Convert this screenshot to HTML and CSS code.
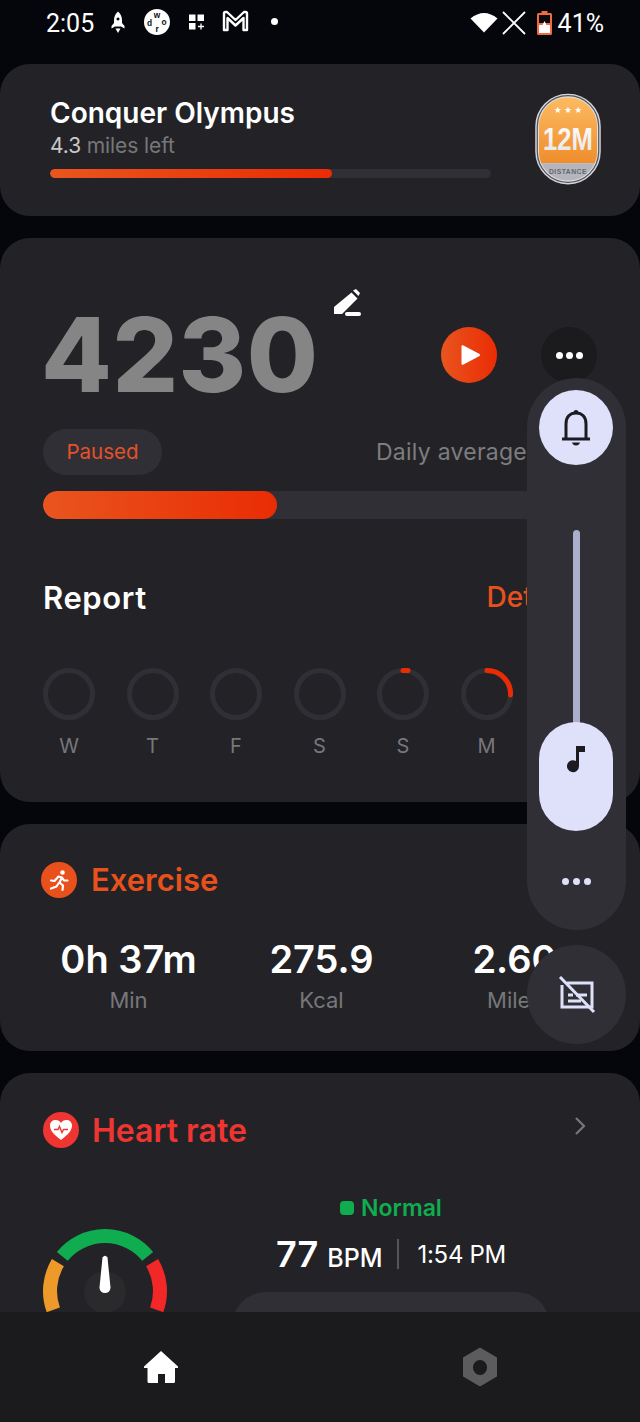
FILE: index.html
```html
<!DOCTYPE html>
<html lang="en">
<head>
  <meta charset="UTF-8">
  <meta name="viewport" content="width=device-width, initial-scale=1.0">
  <title>Activity</title>
  <link rel="stylesheet" href="styles.css">
</head>
<body>
  <div class="screen">
    <div class="statusbar">
      <span class="clock">2:05</span>
      <svg class="st-rocket" width="14" height="22" viewBox="0 0 14 22"><path fill="#fff" fill-rule="evenodd" d="M7 .5c3 2.500 4 5.500 4 9V12l2.500 3v2.500L10 15.500H4L.5 17.500V15L3 12V9.500c0-3.500 1-6.500 4-9zM7 6.500a1.500 1.500 0 1 0 .01 0z"/><path fill="#fff" d="M4.500 17.500h5L7 22z"/></svg>
      <svg class="st-word" width="26" height="26" viewBox="0 0 28 28">
        <circle cx="14" cy="14" r="14" fill="#fff"/>
        <text x="14" y="10" class="st-word-t">w</text>
        <text x="21.500" y="17" class="st-word-t">o</text>
        <text x="14" y="25" class="st-word-t">r</text>
        <text x="6" y="18" class="st-word-t">d</text>
      </svg>
      <svg class="st-tiles" width="18" height="18" viewBox="0 0 18 18"><path fill="#fff" d="M1 1.500h6.500V8H1zM9.500 1.500H16V8H9.500zM1 10h6.500v6.500H1z"/><path stroke="#fff" stroke-width="1.300" d="M13 10.500v6M10 13.500h6"/></svg>
      <svg class="st-mail" width="27" height="22" viewBox="0 0 27 22"><path fill="none" stroke="#fff" stroke-width="2.400" stroke-linejoin="round" d="M2 20V3.500Q2 2 3.500 2H5l8.500 8L22 2h1.500Q25 2 25 3.500V20h-3.500V8l-8 7.500-8-7.500v12z"/></svg>
      <span class="st-dot"></span>
      <span class="st-space"></span>
      <svg class="st-wifi" width="28" height="22" viewBox="0 0 28 22"><path fill="#fff" d="M0.500 7.500Q14-3.500 27.500 7.500L14 21.500z"/></svg>
      <svg class="st-x" width="24" height="24" viewBox="0 0 24 24"><path stroke="#fff" stroke-width="1.800" d="M1 1l22 22M23 1L1 23"/></svg>
      <svg class="st-batt" width="15" height="24" viewBox="0 0 15 24"><path fill="#f26a3e" d="M4.500 0h6v2h3q1.500 0 1.500 1.500v19q0 1.500-1.500 1.500h-12Q0 24 0 22.500v-19Q0 2 1.500 2h3z"/><path fill="#0a0b10" d="M2 4h11v8H2z"/><path fill="#fff" d="M2 14h3.500l2-4 2 4H13v8H2z"/></svg>
      <span class="st-pct">41%</span>
    </div>

    <main class="feed">
      <section class="card goal">
        <div class="goal-text">
          <h2 class="goal-title">Conquer Olympus</h2>
          <p class="goal-sub"><span class="goal-num">4.3</span> miles left</p>
          <div class="track thin"><div class="fill" style="width:64%"></div></div>
        </div>
        <svg class="badge" width="66" height="92" viewBox="0 0 68 94">
          <defs>
            <linearGradient id="badgeOrange" x1="0" y1="0" x2="0" y2="1"><stop offset="0" stop-color="#fdbb62"/><stop offset="1" stop-color="#ef8d2b"/></linearGradient>
            <linearGradient id="badgeText" x1="0" y1="0" x2="0" y2="1"><stop offset="0" stop-color="#fff"/><stop offset="1" stop-color="#e4e4e8"/></linearGradient>
            <clipPath id="badgeClip"><rect x="4" y="4" width="60" height="86" rx="30"/></clipPath>
          </defs>
          <rect x="1" y="1" width="66" height="92" rx="33" fill="#53545a" stroke="#d5d6da" stroke-width="1.500"/>
          <rect x="3" y="3" width="62" height="88" rx="31" fill="#dfe0e4"/>
          <g clip-path="url(#badgeClip)">
            <rect x="4" y="4" width="60" height="68" fill="url(#badgeOrange)"/>
            <rect x="4" y="72" width="60" height="18" fill="#b5b6bd"/>
          </g>
          <text x="34" y="20" class="badge-stars">★ ★ ★</text>
          <text class="badge-num" fill="url(#badgeText)" transform="translate(34 58) scale(.8 1)">12M</text>
          <text x="34" y="83" class="badge-cap">DISTANCE</text>
        </svg>
      </section>

      <section class="card today">
        <div class="count-row">
          <span class="count">4230</span>
          <svg class="edit" width="30" height="30" viewBox="0 0 30 30"><path fill="#fff" d="M21 1.500l3-1.500 4 4-1.500 3zM19.500 3.500l6 6L10 25H2v-7z"/><rect x="13" y="24" width="16" height="4" rx="2" fill="#fff" transform="translate(0 -1)"/></svg>
          <span class="round-btn play"><svg class="play-icon" width="22" height="24" viewBox="0 0 22 24"><path fill="#fff" d="M1.500 3.500q0-2 2-1l16 8.500q1.500 1 0 2l-16 8.500q-2 1-2-1z"/></svg></span>
          <span class="round-btn more"><i></i><i></i><i></i></span>
        </div>
        <div class="state-row">
          <span class="pill">Paused</span>
          <span class="avg">Daily average</span>
        </div>
        <div class="track thick"><div class="fill" style="width:42.200%"></div></div>
        <div class="report-head">
          <h3 class="report-title">Report</h3>
          <span class="report-link">Details</span>
        </div>
        <div class="days">
          <div class="day"><svg class="ring" width="52" height="52" viewBox="0 0 52 52"><circle class="ring-bg" cx="26" cy="26" r="23.500"/></svg><span>W</span></div>
          <div class="day"><svg class="ring" width="52" height="52" viewBox="0 0 52 52"><circle class="ring-bg" cx="26" cy="26" r="23.500"/></svg><span>T</span></div>
          <div class="day"><svg class="ring" width="52" height="52" viewBox="0 0 52 52"><circle class="ring-bg" cx="26" cy="26" r="23.500"/></svg><span>F</span></div>
          <div class="day"><svg class="ring" width="52" height="52" viewBox="0 0 52 52"><circle class="ring-bg" cx="26" cy="26" r="23.500"/></svg><span>S</span></div>
          <div class="day"><svg class="ring" width="52" height="52" viewBox="0 0 52 52"><circle class="ring-bg" cx="26" cy="26" r="23.500"/><path class="ring-on" d="M26 2.500h5"/></svg><span>S</span></div>
          <div class="day"><svg class="ring" width="52" height="52" viewBox="0 0 52 52"><circle class="ring-bg" cx="26" cy="26" r="23.500"/><path class="ring-on" d="M26 2.500A23.500 23.500 0 0 1 49.500 27"/></svg><span>M</span></div>
        </div>
      </section>

      <section class="card exercise">
        <div class="card-head">
          <span class="head-icon orange"><svg width="24" height="24" viewBox="0 0 24 24"><circle cx="15.500" cy="4.500" r="2.300" fill="#fff"/><path fill="none" stroke="#fff" stroke-width="2.200" stroke-linecap="round" stroke-linejoin="round" d="M4 12.500l3.500 .5 4-4.500 3.500 1-2.500 5 3.500 3-.5 4.500M15 9.500l2 3h3.500M11.500 15.500l-2 3-5.500 2"/></svg></span>
          <h3 class="head-title ex-title">Exercise</h3>
        </div>
        <div class="stats">
          <div class="stat"><strong>0h 37m</strong><span>Min</span></div>
          <div class="stat"><strong>275.9</strong><span>Kcal</span></div>
          <div class="stat"><strong>2.60</strong><span>Miles</span></div>
        </div>
      </section>

      <section class="card heart">
        <div class="card-head">
          <span class="head-icon red"><svg width="26" height="26" viewBox="0 0 26 26"><path fill="#fff" d="M13 23C5 17 2 13 2 8.500 2 5 4.700 3 7.500 3 10 3 12 4.300 13 6c1-1.700 3-3 5.500-3C21.300 3 24 5 24 8.500 24 13 21 17 13 23z"/><path fill="none" stroke="#ee3531" stroke-width="1.400" d="M6 12.500h4l1.500-3 2.500 6 1.500-3h4.500"/></svg></span>
          <h3 class="head-title hr-title">Heart rate</h3>
          <svg class="chev" width="12" height="20" viewBox="0 0 12 20"><path fill="none" stroke="#77777a" stroke-width="2.200" d="M2 2l8 8-8 8"/></svg>
        </div>
        <div class="hr-body">
          <svg class="gauge" width="124" height="126" viewBox="0 0 124 126">
            <path fill="none" stroke="#ee9a2a" stroke-width="14" d="M10.300 80.800A55 55 0 0 1 14.900 33.700"/>
            <path fill="none" stroke="#10ad50" stroke-width="14" d="M19.300 27.400A55 55 0 0 1 104.700 27.400"/>
            <path fill="none" stroke="#f22727" stroke-width="14" d="M109.100 33.700A55 55 0 0 1 113.700 80.800"/>
            <circle cx="62" cy="63" r="21" fill="#2a2a2d"/>
            <path fill="#fff" d="M59.500 28.500q2.500-3.500 5 0l3 30a5.500 5.500 0 0 1-11 0z"/>
          </svg>
          <div class="hr-info">
            <div class="hr-state"><i class="hr-dot"></i>Normal</div>
            <div class="hr-read">
              <span class="hr-val">77</span>
              <span class="hr-unit">BPM</span>
              <i class="hr-sep"></i>
              <span class="hr-time">1:54 PM</span>
            </div>
            <div class="hr-box"></div>
          </div>
        </div>
      </section>
    </main>

    <nav class="tabs">
      <svg width="36" height="34" viewBox="0 0 36 34"><path fill="#fff" d="M18 1L35 16.500V18h-3v13.500q0 1.500-1.500 1.500H22v-9h-7v9H6q-1.500 0-1.500-1.500V18H1v-1.500z"/></svg>
      <svg width="36" height="40" viewBox="0 0 36 40"><path fill="#5c5c5e" fill-rule="evenodd" d="M18 .5L35 10.500v19L18 39.500 1 29.500v-19zM18 13a7 7.500 0 1 0 .01 0z"/></svg>
    </nav>

    <!-- volume panel over the page -->
    <div class="volume">
      <span class="vol-top"><svg width="34" height="38" viewBox="0 0 34 38"><path fill="none" stroke="#1c1b22" stroke-width="3" d="M7 30V15C7 8 11 4 17 4s10 4 10 11v15"/><path stroke="#1c1b22" stroke-width="3" d="M3 30h28"/><path fill="#1c1b22" d="M13 33.500h8q-1 3-4 3t-4-3zM14.500 4a2.500 3 0 0 1 5 0z"/></svg></span>
      <div class="vol-slider">
        <div class="vol-line"></div>
        <div class="vol-thumb"><svg width="20" height="28" viewBox="0 0 20 28"><path fill="#1c1b22" d="M10 1h9v6h-6v14.500A6 6 0 1 1 10 16z"/></svg></div>
      </div>
      <div class="vol-more"><i></i><i></i><i></i></div>
    </div>
    <div class="caption-btn">
      <svg width="38" height="38" viewBox="0 0 38 38"><g fill="none" stroke="#dfe1fb" stroke-width="3"><path d="M9 7h25v24H4V9"/><path d="M10 19h5M18 19h11M10 25h13"/><path d="M2 1l34 35"/></g></svg>
    </div>
  </div>
</body>
</html>
```

FILE: styles.css
```css
* {
  box-sizing: border-box;
}

body {
  margin: 0;
  background: #05060b;
  font-family: "Inter", "Liberation Sans", sans-serif;
}

h2, h3, p {
  margin: 0;
}

.screen {
  position: relative;
  width: 640px;
  height: 1422px;
  display: flex;
  flex-direction: column;
  overflow: hidden;
  background: #05060b;
}

/* status bar */
.statusbar {
  height: 64px;
  flex: none;
  display: flex;
  align-items: flex-start;
  padding: 8px 36px 0 46px;
  color: #fff;
  font-family: "Roboto", sans-serif;
  font-size: 25px;
}

.clock {
  line-height: 31px;
  width: 49px;
}

.statusbar svg {
  flex: none;
  margin-top: 3px;
}

.st-rocket { margin-left: 16px; }
.st-word { margin-left: 19px; margin-top: 1px !important; }
.st-tiles { margin-left: 18px; margin-top: 5px !important; }
.st-mail { margin-left: 16px; margin-top: 2px !important; }

.st-word-t {
  font-family: "Liberation Sans", sans-serif;
  font-size: 9px;
  font-weight: 700;
  text-anchor: middle;
  fill: #111;
}

.st-dot {
  width: 7px;
  height: 7px;
  margin: 10px 0 0 22px;
  border-radius: 50%;
  background: #fff;
}

.st-space {
  flex: 1;
}

.st-x { margin-left: 4px; }
.st-batt { margin-left: 11px; }

.st-pct {
  margin-left: 6px;
  line-height: 31px;
}

/* cards */
.feed {
  flex: 1;
  min-height: 0;
  display: flex;
  flex-direction: column;
  gap: 22px;
  overflow: hidden;
}

.card {
  flex: none;
  background: #232327;
  border-radius: 30px;
}

.goal {
  height: 152px;
  display: flex;
  padding: 29px 38px 0 50px;
  justify-content: space-between;
}

.goal-text {
  width: 441px;
}

.goal-title {
  font-size: 28px;
  line-height: 40px;
  font-weight: 600;
  color: #fff;
}

.goal-sub {
  font-size: 21px;
  line-height: 26px;
  color: #77777a;
  margin-bottom: 10px;
  letter-spacing: -.1px;
}

.goal-num {
  color: #c9c9cb;
}

.track {
  background: #2f2f35;
  overflow: hidden;
}

.fill {
  height: 100%;
  border-radius: inherit;
  background: linear-gradient(90deg, #e9551e, #ea2c05);
}

.track.thin {
  height: 9px;
  border-radius: 5px;
}

.badge {
  flex: none;
  margin-right: 1px;
}

.badge-stars {
  font-size: 8px;
  text-anchor: middle;
  fill: #fff;
}

.badge-num {
  font-family: "Liberation Sans", sans-serif;
  font-size: 33px;
  font-weight: 700;
  text-anchor: middle;
}

.badge-cap {
  font-family: "Liberation Sans", sans-serif;
  font-size: 7px;
  font-weight: 700;
  text-anchor: middle;
  letter-spacing: .5px;
  fill: #65666d;
}

/* daily count */
.today {
  height: 564px;
  padding: 0 0 0 43px;
  overflow: hidden;
}

.count-row {
  height: 148px;
  display: flex;
  align-items: flex-start;
  padding-top: 51px;
}

.count {
  flex: none;
  width: 291px;
  margin-left: -2px;
  font-size: 103px;
  line-height: 132px;
  font-weight: 800;
  letter-spacing: .5px;
  color: #858585;
}

.edit {
  flex: none;
}

.round-btn {
  flex: none;
  width: 56px;
  height: 56px;
  border-radius: 50%;
  display: flex;
  align-items: center;
  justify-content: center;
  margin-top: 38px;
}

.play {
  margin-left: 79px;
  background: linear-gradient(90deg, #e9551e, #ea2c05);
}

.play-icon {
  margin-left: 4px;
}

.more {
  margin-left: 44px;
  gap: 3px;
  background: #1b1b1d;
}

.more i, .vol-more i {
  width: 7px;
  height: 7px;
  border-radius: 50%;
  background: #fff;
}

.state-row {
  display: flex;
  align-items: center;
  height: 46px;
  margin-top: 43px;
}

.pill {
  width: 119px;
  height: 46px;
  line-height: 46px;
  text-align: center;
  border-radius: 23px;
  background: #2f2f35;
  color: #e5512a;
  font-size: 20.500px;
}

.avg {
  margin-left: 214px;
  font-size: 23px;
  letter-spacing: .25px;
  color: #7d7d7f;
  white-space: nowrap;
}

.track.thick {
  height: 28px;
  margin: 16px 43px 0 0;
  border-radius: 14px;
}

.report-head {
  display: flex;
  justify-content: space-between;
  align-items: center;
  height: 44px;
  margin-top: 56px;
  padding-right: 62px;
}

.report-title {
  font-size: 31px;
  font-weight: 600;
  letter-spacing: .6px;
  color: #fff;
}

.report-link {
  font-size: 28px;
  font-weight: 500;
  color: #e9511c;
}

.days {
  display: flex;
  margin-top: 49px;
  gap: 31.500px;
}

.day {
  width: 52px;
  display: flex;
  flex-direction: column;
  align-items: center;
  gap: 12px;
  font-size: 20px;
  line-height: 28px;
  color: #77777a;
}

.ring-bg {
  fill: none;
  stroke: #2f2f35;
  stroke-width: 5;
}

.ring-on {
  fill: none;
  stroke: #ea2c05;
  stroke-width: 5;
  stroke-linecap: round;
}

.card-head {
  display: flex;
  align-items: center;
}

.head-icon {
  flex: none;
  width: 36px;
  height: 36px;
  border-radius: 50%;
  display: flex;
  align-items: center;
  justify-content: center;
}

.head-icon.orange { background: #e9511c; }
.head-icon.red { background: #ee3531; }

.head-title {
  margin-left: 14px;
  font-size: 31px;
  line-height: 34px;
  font-weight: 600;
}

.ex-title { color: #e9511c; }

.hr-title {
  margin: 2px 0 0 13px;
  font-size: 32px;
  color: #ee3531;
}

.exercise {
  height: 227px;
  padding: 38px 0 0 41px;
}

.stats {
  display: grid;
  grid-template-columns: repeat(3, 193px);
  margin: 39px 0 0 -9px;
}

.stat {
  display: flex;
  flex-direction: column;
  align-items: center;
  color: #77777a;
  font-size: 22px;
  line-height: 28px;
}

.stat strong {
  font-size: 38px;
  line-height: 44px;
  font-weight: 600;
  color: #fff;
  margin-bottom: 5px;
  white-space: nowrap;
}

.heart {
  height: 300px;
  padding: 39px 0 0 43px;
}

.chev {
  margin-left: auto;
  margin-right: 54px;
  margin-top: -8px;
}

.hr-body {
  display: flex;
  margin-top: 41px;
}

.gauge {
  flex: none;
  margin-top: 40px;
}

.hr-info {
  width: 318px;
  margin-left: 65px;
  display: flex;
  flex-direction: column;
  align-items: center;
}

.hr-state {
  display: flex;
  align-items: center;
  gap: 7px;
  margin-top: 5px;
  font-size: 23px;
  line-height: 28px;
  font-weight: 600;
  color: #10ad50;
}

.hr-dot {
  width: 14px;
  height: 14px;
  border-radius: 4px;
  background: #10ad50;
}

.hr-read {
  display: flex;
  align-items: center;
  height: 44px;
  margin-top: 10px;
  color: #fff;
}

.hr-val {
  font-size: 36px;
  font-weight: 600;
}

.hr-unit {
  margin: 8px 0 0 9px;
  font-size: 25px;
  font-weight: 500;
}

.hr-sep {
  width: 2px;
  height: 30px;
  margin: 0 19px 0 14px;
  background: #55555a;
}

.hr-time {
  font-size: 24px;
  letter-spacing: -.3px;
}

.hr-box {
  align-self: stretch;
  height: 90px;
  margin-top: 16px;
  border-radius: 34px;
  background: #2f2f35;
}

.tabs {
  height: 110px;
  flex: none;
  display: flex;
  align-items: center;
  background: #1b1b1d;
  padding: 0 142px 0 143px;
  justify-content: space-between;
}

/* overlay */
.volume {
  position: absolute;
  left: 527px;
  top: 378px;
  width: 99px;
  height: 552px;
  border-radius: 50px;
  background: #2f2f35;
  display: flex;
  flex-direction: column;
  align-items: center;
  padding: 12px 1px 0 0;
}

.vol-top {
  width: 74px;
  height: 75px;
  border-radius: 50%;
  background: #dfe1fb;
  display: flex;
  align-items: center;
  justify-content: center;
}

.vol-slider {
  display: flex;
  flex-direction: column;
  align-items: center;
  margin-top: 65px;
}

.vol-line {
  width: 7px;
  height: 194px;
  margin-bottom: -2px;
  border-radius: 4px 4px 0 0;
  background: #aab0cb;
}

.vol-thumb {
  width: 74px;
  height: 109px;
  border-radius: 37px;
  background: #dfe1fb;
  display: flex;
  justify-content: center;
  padding-top: 23px;
}

.vol-more {
  display: flex;
  gap: 4px;
  margin-top: 47px;
}

.vol-more i {
  background: #dfe1fb;
}

.caption-btn {
  position: absolute;
  left: 527px;
  top: 945px;
  width: 99px;
  height: 99px;
  border-radius: 50%;
  background: #2f2f35;
  display: flex;
  align-items: center;
  justify-content: center;
}
```
